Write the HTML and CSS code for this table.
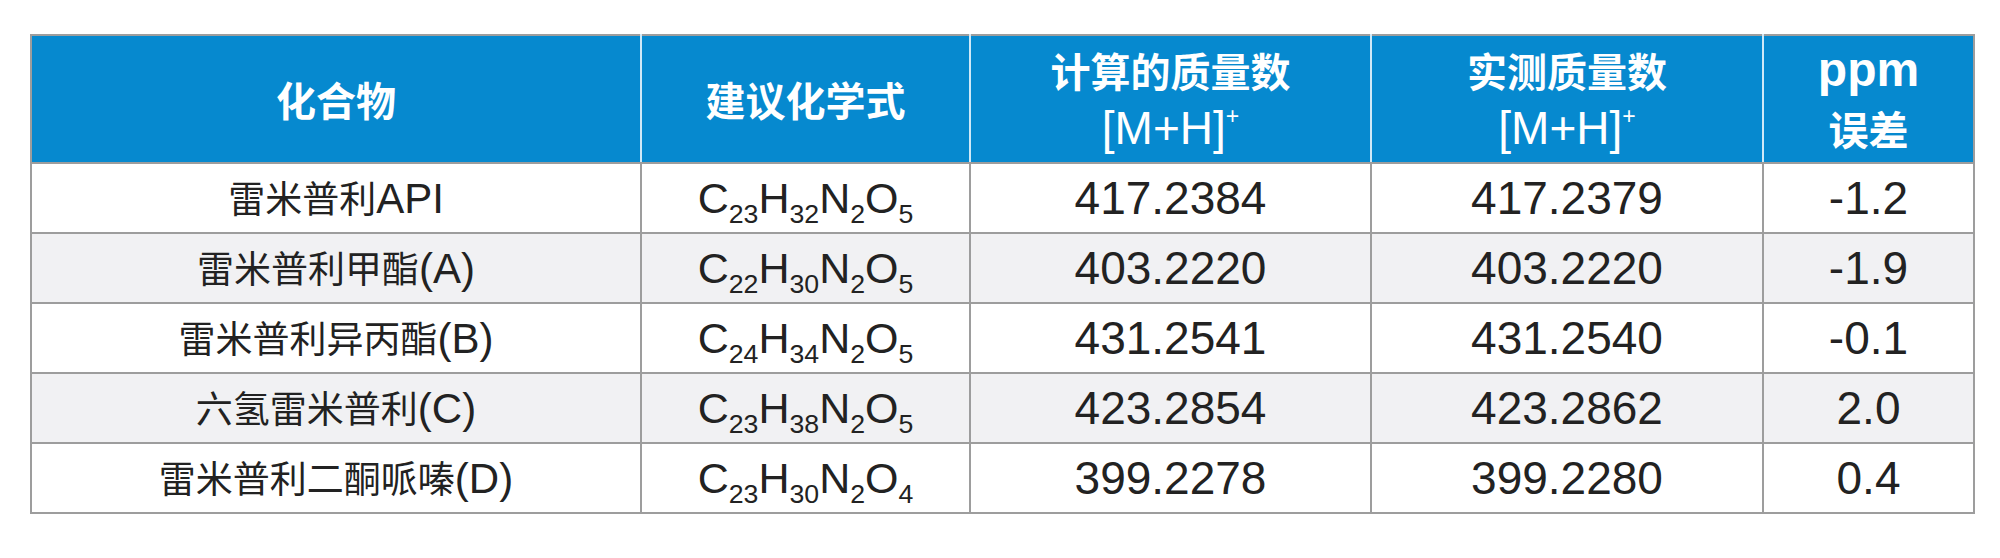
FILE: index.html
```html
<!DOCTYPE html>
<html lang="zh-CN">
<head>
<meta charset="utf-8">
<title>雷米普利</title>
<link rel="stylesheet" href="styles.css">
</head>
<body>
<table class="data">
  <colgroup>
    <col class="c1"><col class="c2"><col class="c3"><col class="c4"><col class="c5">
  </colgroup>
  <thead>
    <tr>
      <th>化合物</th>
      <th>建议化学式</th>
      <th><span class="hl">计算的质量数</span><span class="hl lat">[M+H]<sup>+</sup></span></th>
      <th><span class="hl">实测质量数</span><span class="hl lat">[M+H]<sup>+</sup></span></th>
      <th><span class="hl lat b">ppm</span><span class="hl">误差</span></th>
    </tr>
  </thead>
  <tbody>
    <tr>
      <td class="name">雷米普利<span class="lat">API</span></td>
      <td class="formula">C<sub>23</sub>H<sub>32</sub>N<sub>2</sub>O<sub>5</sub></td>
      <td>417.2384</td>
      <td>417.2379</td>
      <td>-1.2</td>
    </tr>
    <tr class="alt">
      <td class="name">雷米普利甲酯<span class="lat">(A)</span></td>
      <td class="formula">C<sub>22</sub>H<sub>30</sub>N<sub>2</sub>O<sub>5</sub></td>
      <td>403.2220</td>
      <td>403.2220</td>
      <td>-1.9</td>
    </tr>
    <tr>
      <td class="name">雷米普利异丙酯<span class="lat">(B)</span></td>
      <td class="formula">C<sub>24</sub>H<sub>34</sub>N<sub>2</sub>O<sub>5</sub></td>
      <td>431.2541</td>
      <td>431.2540</td>
      <td>-0.1</td>
    </tr>
    <tr class="alt">
      <td class="name">六氢雷米普利<span class="lat">(C)</span></td>
      <td class="formula">C<sub>23</sub>H<sub>38</sub>N<sub>2</sub>O<sub>5</sub></td>
      <td>423.2854</td>
      <td>423.2862</td>
      <td>2.0</td>
    </tr>
    <tr>
      <td class="name">雷米普利二酮哌嗪<span class="lat">(D)</span></td>
      <td class="formula">C<sub>23</sub>H<sub>30</sub>N<sub>2</sub>O<sub>4</sub></td>
      <td>399.2278</td>
      <td>399.2280</td>
      <td>0.4</td>
    </tr>
  </tbody>
</table>
</body>
</html>
```
FILE: styles.css
```css
html, body {
  margin: 0;
  padding: 0;
  background: #ffffff;
}
body {
  padding: 34px 0 0 30px;
  font-family: "Liberation Sans", Arial, "Noto Sans CJK SC", sans-serif;
  color: #222222;
}
.data {
  border-collapse: collapse;
  width: 1943px;
  table-layout: fixed;
  border: 2px solid #9d9d9d;
}
.c1 { width: 610px; }
.c2 { width: 329px; }
.c3 { width: 401px; }
.c4 { width: 392px; }
.c5 { width: 211px; }

.data th {
  height: 126px;
  padding: 0;
  background: #0689cf;
  color: #ffffff;
  font-family: "Noto Sans CJK SC", sans-serif;
  font-weight: 700;
  font-size: 40px;
  line-height: 58px;
  text-align: center;
  vertical-align: middle;
  border-left: 2px solid #cfe9f7;
  border-bottom: 2px solid #9d9d9d;
}
.data th:first-child { border-left: 2px solid #9d9d9d; }
.hl { display: block; }
.hl.lat {
  font-family: "Liberation Sans Narrow", "Liberation Sans", Arial, sans-serif;
  font-weight: 400;
  font-size: 46px;
}
.hl.lat.b { font-weight: 700; font-size: 48px; }
.data th sup {
  font-size: 0.5em;
  vertical-align: 0.85em;
  line-height: 0;
}

.data td {
  height: 68px;
  padding: 0;
  text-align: center;
  vertical-align: middle;
  font-size: 46px;
  line-height: 50px;
  border: 2px solid #9d9d9d;
}
.data td.formula { font-size: 43px; }
.data td.name {
  font-family: "Noto Sans CJK SC", sans-serif;
  font-size: 37px;
}
.data td.name .lat {
  font-family: "Liberation Sans Narrow", "Liberation Sans", Arial, sans-serif;
  font-size: 42px;
}
.data tr.alt td { background: #f1f1f3; }
.data td sub {
  font-size: 0.62em;
  vertical-align: -10px;
  line-height: 0;
}
```
